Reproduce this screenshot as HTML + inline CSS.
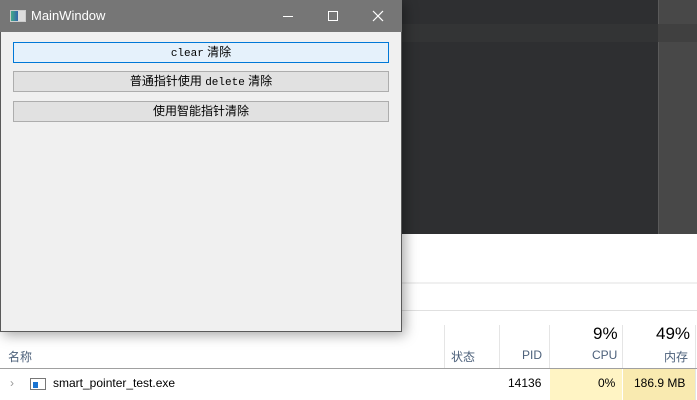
<!DOCTYPE html>
<html><head><meta charset="utf-8"><style>
*{margin:0;padding:0;box-sizing:border-box}
body{width:697px;height:400px;overflow:hidden;position:relative;background:#fff;font-family:"Liberation Sans","Noto Sans CJK SC",sans-serif}
.a{position:absolute}
.btn{position:absolute;left:12px;width:376px;height:21px;border:1px solid #adadad;background:#e1e1e1;font-size:12px;text-align:center;line-height:19px;color:#000}
.mono{font-family:"Liberation Mono","Noto Sans CJK SC",monospace;font-size:11px}
.h{color:#4c607a;font-size:12px}
</style></head><body>
<div class="a" style="left:401px;top:0;width:296px;height:234px;background:#2e2f31"></div>
<div class="a" style="left:401px;top:24px;width:257px;height:18px;background:#333435"></div>
<div class="a" style="left:658px;top:0;width:39px;height:234px;background:#484848;border-left:1px solid #5a5a5a"></div>
<div class="a" style="left:658px;top:24px;width:39px;height:18px;background:#404040"></div>
<div class="a" style="left:0;top:282px;width:697px;height:2px;background:#f0f0f0"></div>
<div class="a" style="left:0;top:310px;width:697px;height:1px;background:#e0e0e0"></div>
<div class="a" style="left:444px;top:325px;width:1px;height:43px;background:#e5e5e5"></div>
<div class="a" style="left:499px;top:325px;width:1px;height:43px;background:#e5e5e5"></div>
<div class="a" style="left:549px;top:325px;width:1px;height:43px;background:#e5e5e5"></div>
<div class="a" style="left:622px;top:325px;width:1px;height:43px;background:#e5e5e5"></div>
<div class="a" style="left:695px;top:325px;width:1px;height:75px;background:#e5e5e5"></div>
<div class="a" style="left:0;top:368px;width:697px;height:1px;background:#a0a0a0"></div>
<div class="a h" style="left:8px;top:348px">名称</div>
<div class="a h" style="left:451px;top:348px">状态</div>
<div class="a h" style="left:522px;top:348px">PID</div>
<div class="a h" style="left:592px;top:348px">CPU</div>
<div class="a h" style="left:664px;top:348px">内存</div>
<div class="a" style="left:593px;top:324px;font-size:17px">9%</div>
<div class="a" style="left:656px;top:324px;font-size:17px">49%</div>
<div class="a" style="left:550px;top:369px;width:72px;height:31px;background:#fff4c4"></div>
<div class="a" style="left:623px;top:369px;width:72px;height:31px;background:#f9eab0"></div>
<div class="a" style="left:10px;top:376px;color:#999;font-size:12px">›</div>
<div class="a" style="left:30px;top:378px;width:16px;height:12px;border:1px solid #777;background:#fff"><div class="a" style="left:2px;top:3px;width:5px;height:6px;background:#1a73d0"></div></div>
<div class="a" style="left:53px;top:376px;font-size:12px">smart_pointer_test.exe</div>
<div class="a" style="left:508px;top:376px;font-size:12px">14136</div>
<div class="a" style="left:598px;top:376px;font-size:12px">0%</div>
<div class="a" style="left:634px;top:376px;font-size:12px">186.9 MB</div>
<div class="a" style="left:0;top:0;width:402px;height:332px;background:#f0f0f0;border:1px solid #5a5a5a;box-shadow:3px 3px 12px rgba(0,0,0,.35)">
<div class="a" style="left:-1px;top:-1px;width:402px;height:32px;background:#767676"></div>
<div class="a" style="left:9px;top:9px;width:16px;height:12px;border:1px solid #ccc;background:linear-gradient(90deg,#4a8 0,#36a 50%,#ddd 50%)"></div>
<div class="a" style="left:30px;top:7px;color:#fff;font-size:13px">MainWindow</div>
<div class="a" style="left:282px;top:15px;width:10px;height:1px;background:#fff"></div>
<div class="a" style="left:327px;top:10px;width:10px;height:10px;border:1px solid #fff"></div>
<svg class="a" style="left:371px;top:9px" width="12" height="12"><path d="M1 1L11 11M11 1L1 11" stroke="#fff" stroke-width="1.2"/></svg>
<div class="btn" style="top:41px;border-color:#0078d7;background:#e5f1fb"><span class="mono">clear</span> 清除</div>
<div class="btn" style="top:70px">普通指针使用 <span class="mono">delete</span> 清除</div>
<div class="btn" style="top:100px">使用智能指针清除</div>
</div>
</body></html>
